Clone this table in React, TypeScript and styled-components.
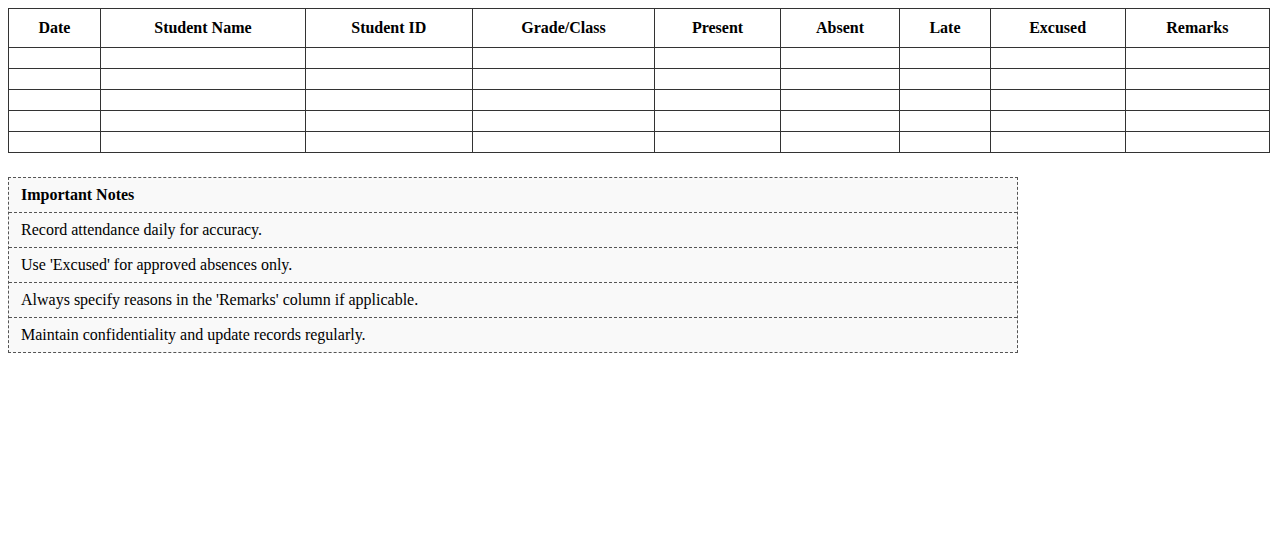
import React from "react";
import styled, { createGlobalStyle } from "styled-components";

const GlobalStyle = createGlobalStyle`
  html, body {
    margin: 0;
    padding: 0;
    background: #ffffff;
  }
  body {
    margin: 8px;
    font-family: "Liberation Serif", "Times New Roman", serif;
    font-size: 16px;
    color: #000;
  }
`;

const Table = styled.table`
  width: 100%;
  border-collapse: collapse;
  margin-bottom: 24px;
`;

const Th = styled.th`
  border: 1px solid #333;
  padding: 10px;
  font-weight: bold;
  text-align: center;
`;

const Td = styled.td`
  border: 1px solid #333;
  padding: 10px;
`;

const Notes = styled.div`
  box-sizing: border-box;
  width: 80%;
  border: 1px dashed #555;
  background: #f9f9f9;
`;

const NoteRow = styled.div<{ $title?: boolean }>`
  padding: 8px 12px;
  line-height: 18px;
  font-weight: ${(p) => (p.$title ? "bold" : "normal")};
  border-bottom: 1px dashed #555;
  &:last-child {
    border-bottom: none;
  }
`;

const columns = [
  "Date",
  "Student Name",
  "Student ID",
  "Grade/Class",
  "Present",
  "Absent",
  "Late",
  "Excused",
  "Remarks",
];

const notes = [
  "Record attendance daily for accuracy.",
  "Use 'Excused' for approved absences only.",
  "Always specify reasons in the 'Remarks' column if applicable.",
  "Maintain confidentiality and update records regularly.",
];

export default function App() {
  return (
    <>
      <GlobalStyle />
      <Table>
        <thead>
          <tr>
            {columns.map((c) => (
              <Th key={c}>{c}</Th>
            ))}
          </tr>
        </thead>
        <tbody>
          {[0, 1, 2, 3, 4].map((r) => (
            <tr key={r}>
              {columns.map((c) => (
                <Td key={c}></Td>
              ))}
            </tr>
          ))}
        </tbody>
      </Table>
      <Notes>
        <NoteRow $title>Important Notes</NoteRow>
        {notes.map((n) => (
          <NoteRow key={n}>{n}</NoteRow>
        ))}
      </Notes>
    </>
  );
}
